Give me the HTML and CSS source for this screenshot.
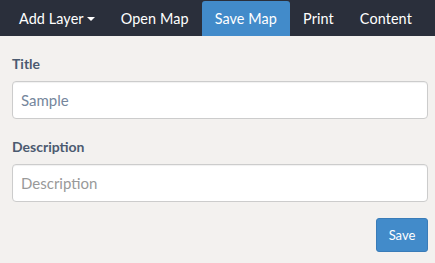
FILE: index.html
```html
<!DOCTYPE html>
<html>
<head>
<meta charset="utf-8">
<link rel="stylesheet" href="styles.css">
</head>
<body>
<nav class="navbar">
  <a class="nav-item">Add Layer<span class="caret"></span></a>
  <a class="nav-item">Open Map</a>
  <a class="nav-item active">Save Map</a>
  <a class="nav-item">Print</a>
  <a class="nav-item">Content</a>
</nav>
<form class="panel">
  <div class="field">
    <label class="label">Title</label>
    <input class="input value" type="text" value="Sample">
  </div>
  <div class="field last">
    <label class="label">Description</label>
    <input class="input" type="text" placeholder="Description">
  </div>
  <div class="actions">
    <button type="button" class="btn">Save</button>
  </div>
</form>
</body>
</html>
```
FILE: styles.css
```css
* { box-sizing: border-box; }
html, body { margin: 0; padding: 0; }
body {
  background: #f3f1ef;
  font-family: "Lato", "Liberation Sans", sans-serif;
  width: 435px;
  height: 263px;
  overflow: hidden;
}
.navbar {
  display: flex;
  align-items: flex-end;
  height: 36px;
  background: #2a2f3b;
  padding-left: 6px;
}
.nav-item {
  display: flex;
  align-items: center;
  height: 35px;
  padding: 0 13px;
  color: #ffffff;
  font-size: 14.4px;
  letter-spacing: 0.1px;
  border-radius: 3px 3px 0 0;
}
.nav-item.active { background: #428bca; }
.caret {
  display: inline-block;
  margin-left: 3px;
  width: 0; height: 0;
  border-left: 4px solid transparent;
  border-right: 4px solid transparent;
  border-top: 4px solid #fff;
}
.panel {
  padding: 19px 7px 0 12px;
}
.field { display: flex; flex-direction: column; margin-bottom: 19px; }
.field.last { margin-bottom: 16px; }
.label {
  font-weight: bold;
  font-size: 14px;
  color: #4b5a70;
  margin-bottom: 9px;
  line-height: 17px;
}
.input {
  height: 38px;
  border: 1px solid #cccccc;
  border-radius: 4px;
  background: #fff;
  padding: 0 8px;
  font-family: inherit;
  font-size: 15px;
  box-shadow: inset 0 1px 1px rgba(0,0,0,0.06);
}
.input.value { color: #75869c; }
.input::placeholder { color: #999; }
.actions { display: flex; justify-content: flex-end; }
.btn {
  width: 52px; height: 34px;
  background: #428bca;
  border: 1px solid #3a7cb8;
  border-radius: 3px;
  color: #fff;
  font-family: inherit;
  font-size: 13px;
  padding: 0;
}
```
